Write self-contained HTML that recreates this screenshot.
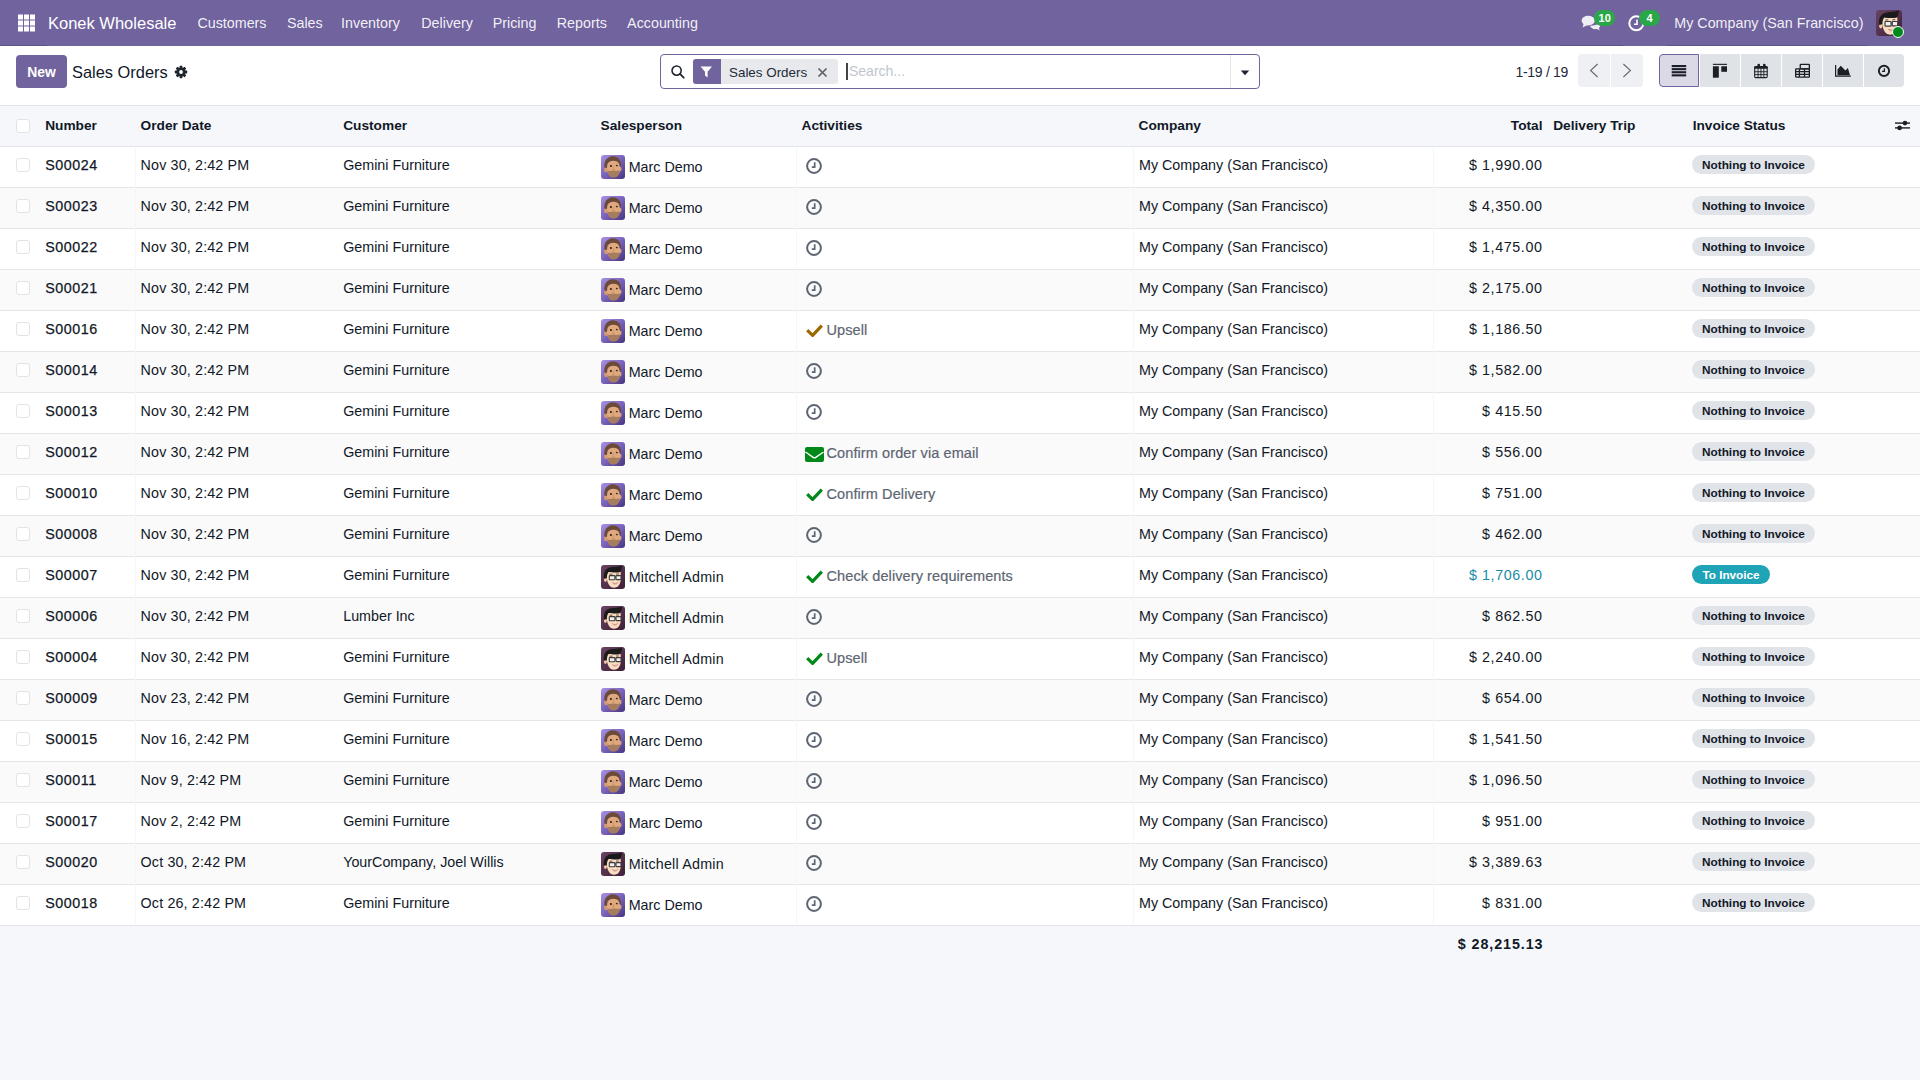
<!DOCTYPE html><html><head><meta charset="utf-8"><title>Sales Orders</title><style>
*{box-sizing:border-box;margin:0;padding:0}
html,body{width:1920px;height:1080px;overflow:hidden;background:#f6f7fa;font-family:"Liberation Sans",sans-serif;color:#111827}
.abs{position:absolute}
.t{position:absolute;white-space:nowrap;line-height:20px;font-size:14.3px}
#nav{position:absolute;left:0;top:0;width:1920px;height:46px;background:#71639e}
#nav .m{position:absolute;top:0;line-height:46px;font-size:14.3px;color:rgba(255,255,255,.92);white-space:nowrap}
#cp{position:absolute;left:0;top:46px;width:1920px;height:60px;background:#fff;border-bottom:1px solid #dfe2e7}
#thead{position:absolute;left:0;top:106px;width:1920px;height:41px;background:#f6f7fa;border-bottom:1px solid #e2e5ea}
.th{position:absolute;top:0;line-height:40px;font-size:13.7px;font-weight:bold;color:#111827;white-space:nowrap}
.row{position:absolute;left:0;width:1920px;height:41px;border-bottom:1px solid #e4e6eb;background:#fff}
.row.s{background:#fafafb}
.cb{position:absolute;left:16px;width:14px;height:14px;border:1px solid #e0e3e7;border-radius:3px;background:#fff}
.c{position:absolute;top:-2px;line-height:40px;font-size:14.3px;white-space:nowrap;color:#111827}
.num{letter-spacing:0.55px;-webkit-text-stroke:0.25px #111827}
.av{position:absolute;display:block}
.ic{position:absolute;display:block}
.act{position:absolute;top:0;line-height:40px;font-size:14.5px;color:#5d6572;white-space:nowrap;-webkit-text-stroke:0.2px #5d6572;letter-spacing:0.1px}
.amt{position:absolute;top:-2px;line-height:40px;font-size:14.3px;white-space:nowrap;text-align:right;right:377.5px;letter-spacing:0.6px}
.badge{position:absolute;left:1692px;height:19px;border-radius:10px;background:#e0e3e8;font-size:11.8px;font-weight:bold;line-height:20px;color:#111827;padding:0 10px;white-space:nowrap}
.badge.ti{background:#1fa3b7;color:#fff}
.sep{position:absolute;top:147px;width:1px;height:778px;background:#f5f6f8}
</style></head><body>
<div id="nav">
<svg class="abs" style="left:0;top:0" width="60" height="46"><rect x="18" y="14.5" width="5" height="5" fill="#fff"/><rect x="18" y="20.5" width="5" height="5" fill="#fff"/><rect x="18" y="26.5" width="5" height="5" fill="#fff"/><rect x="24" y="14.5" width="5" height="5" fill="#fff"/><rect x="24" y="20.5" width="5" height="5" fill="#fff"/><rect x="24" y="26.5" width="5" height="5" fill="#fff"/><rect x="30" y="14.5" width="5" height="5" fill="#fff"/><rect x="30" y="20.5" width="5" height="5" fill="#fff"/><rect x="30" y="26.5" width="5" height="5" fill="#fff"/></svg>
<div class="abs" style="left:0;top:45px;width:47px;height:1px;background:#5f5189"></div>
<div class="abs" style="left:1560px;top:45px;width:63px;height:1px;background:#5f5189"></div>
<div class="abs" style="left:1667px;top:45px;width:201px;height:1px;background:#5f5189"></div>
<div class="m" style="left:48px;font-size:16.5px;color:#fff">Konek Wholesale</div>
<div class="m" style="left:197.4px">Customers</div>
<div class="m" style="left:286.9px">Sales</div>
<div class="m" style="left:341.1px">Inventory</div>
<div class="m" style="left:421.3px">Delivery</div>
<div class="m" style="left:492.7px">Pricing</div>
<div class="m" style="left:556.8px">Reports</div>
<div class="m" style="left:627.1px">Accounting</div>
<svg class="abs" style="left:1580px;top:13px" width="22" height="20" viewBox="0 0 22 20"><ellipse cx="8.2" cy="7.6" rx="6.6" ry="4.9" fill="#efedf5"/><path d="M3.6 10.6 L2.6 14.6 L7.6 12" fill="#efedf5"/><path d="M10 12.8 C11 15.6 14 16.6 17 16 L19.8 17.6 L18.8 15.2 C20.6 14 20.8 11.6 19.6 10 C17.6 11.8 14 12.8 10 12.8Z" fill="#efedf5"/></svg>
<div class="abs" style="left:1594px;top:9.5px;width:21.3px;height:16px;border-radius:8px;background:#2aa748;color:#fff;font-size:11px;font-weight:bold;line-height:16px;text-align:center">10</div>
<svg class="abs" style="left:1628px;top:15px" width="17" height="17" viewBox="0 0 17 17"><circle cx="8.3" cy="8.3" r="7" fill="none" stroke="#fff" stroke-width="2"/><path d="M9 4.5 V9.2 H6" fill="none" stroke="#fff" stroke-width="1.6"/></svg>
<div class="abs" style="left:1639px;top:10px;width:21px;height:16px;border-radius:8px;background:#2aa748;color:#fff;font-size:11px;font-weight:bold;line-height:16px;text-align:center">4</div>
<div class="m" style="left:1674.3px">My Company (San Francisco)</div>
<div class="abs" style="left:1876px;top:10px;width:26px;height:26px"><svg class="av" viewBox="0 0 24 24" width="26" height="26"><defs><linearGradient id="gnav" x1="0" y1="0" x2="1" y2="1"><stop offset="0" stop-color="#6a4362"/><stop offset="1" stop-color="#3f2037"/></linearGradient></defs><rect width="24" height="24" rx="3" fill="url(#gnav)"/><ellipse cx="4.4" cy="14.6" rx="1.5" ry="2.4" fill="#f4cba9"/><path d="M5.6 9 C5.4 16 7.6 22.8 13 22.8 C17.6 22.8 19.6 18.6 20 13 L19.6 6.8 L6.6 6.6 Z" fill="#fadcc0"/><path d="M3 13.8 C2.2 8 4 3.2 9.8 2.2 C13.4 1.6 18 1.8 20.9 0.4 C21.2 3.6 20 6.4 18.6 7.2 C15 7.8 10 7.2 7.6 6.9 C6.4 8.4 5.8 10.8 5.8 13.2 Z" fill="#1b1b1b"/><path d="M8.6 9.2 H11.4 M15.2 9 H17.8" stroke="#3a2a24" stroke-width="0.8"/><rect x="8.3" y="10.6" width="5.6" height="4.2" rx="0.6" fill="#f2f0ee" stroke="#3b3b3b" stroke-width="1.1"/><rect x="15" y="10.6" width="5" height="4" rx="0.6" fill="#f2f0ee" stroke="#3b3b3b" stroke-width="1.1"/><path d="M13.9 12 H15" stroke="#3b3b3b" stroke-width="0.9"/><path d="M11.4 17.6 C13 18.8 15.2 18.8 16.8 17.4 C15.6 19.6 12.6 19.8 11.4 17.6Z" fill="#e6e1de" stroke="#b86a6a" stroke-width="0.5"/></svg></div>
<div class="abs" style="left:1892px;top:26.3px;width:12px;height:12px;border-radius:6px;background:#008a1c;border:1.3px solid #fff"></div>
</div>
<div id="cp">
<div class="abs" style="left:16px;top:9px;width:51px;height:33px;border-radius:4px;background:#71639e;color:#fff;font-weight:bold;font-size:13.9px;line-height:35px;text-align:center">New</div>
<div class="abs" style="left:72px;top:0;line-height:52px;font-size:16.4px;color:#111827;white-space:nowrap">Sales Orders</div>
<svg class="abs" style="left:174px;top:19px" width="14" height="14" viewBox="0 0 14 14"><g fill="#1f2430"><circle cx="7" cy="7" r="4.6"/><rect x="5.6" y="0.8" width="2.8" height="12.4" rx="0.6"/><rect x="0.8" y="5.6" width="12.4" height="2.8" rx="0.6"/><rect x="5.6" y="0.8" width="2.8" height="12.4" rx="0.6" transform="rotate(45 7 7)"/><rect x="5.6" y="0.8" width="2.8" height="12.4" rx="0.6" transform="rotate(-45 7 7)"/></g><circle cx="7" cy="7" r="1.9" fill="#fff"/></svg>
<div class="abs" style="left:660px;top:8px;width:600px;height:35px;border:1px solid #71639e;border-radius:4px;background:#fff">
<svg class="abs" style="left:10px;top:10.4px" width="14" height="14" viewBox="0 0 15 15"><circle cx="6" cy="6" r="4.9" fill="none" stroke="#1f2430" stroke-width="1.7"/><path d="M9.6 9.6 L13.6 13.6" stroke="#1f2430" stroke-width="1.9" stroke-linecap="round"/></svg>
<div class="abs" style="left:32px;top:4px;width:145px;height:25px;border-radius:3px;background:#e7e9ed;overflow:hidden">
<div class="abs" style="left:0;top:0;width:28px;height:25px;background:#71639e"></div>
<svg class="abs" style="left:7px;top:6.5px" width="13" height="12" viewBox="0 0 13 12"><path d="M0.6 0.6 H12 L7.6 5.8 V11.4 L5 9.6 V5.8 Z" fill="#fff"/></svg>
<div class="abs" style="left:36px;top:1px;line-height:25px;font-size:13.4px;color:#1f2937;white-space:nowrap">Sales Orders</div>
<svg class="abs" style="left:124px;top:7.5px" width="11" height="11" viewBox="0 0 11 11"><path d="M1.5 1.5 L9.5 9.5 M9.5 1.5 L1.5 9.5" stroke="#5a5f6a" stroke-width="1.7"/></svg>
</div>
<div class="abs" style="left:185px;top:8px;width:2px;height:17px;background:#444"></div>
<div class="abs" style="left:188px;top:0;line-height:33px;font-size:14px;color:#bfc5cf;white-space:nowrap">Search...</div>
<div class="abs" style="left:569px;top:0;width:1px;height:33px;background:#e3e6ea"></div>
<svg class="abs" style="left:579px;top:15px" width="10" height="6" viewBox="0 0 10 6"><path d="M0.8 0.6 H9.2 L5 5.2Z" fill="#1f2430"/></svg>
</div>
<div class="abs" style="left:1515.5px;top:0;line-height:52px;font-size:14px;color:#1f2937;white-space:nowrap;letter-spacing:-0.3px">1-19 / 19</div>
<div class="abs" style="left:1578px;top:8px;width:32px;height:33px;border-radius:4px 0 0 4px;background:#eff0f3"></div>
<div class="abs" style="left:1611px;top:8px;width:32px;height:33px;border-radius:0 4px 4px 0;background:#eff0f3"></div>
<svg class="abs" style="left:1589px;top:17px" width="10" height="15" viewBox="0 0 10 15"><path d="M8.6 1 L1.6 7.5 L8.6 14" fill="none" stroke="#6b6f78" stroke-width="1.2"/></svg>
<svg class="abs" style="left:1622px;top:17px" width="10" height="15" viewBox="0 0 10 15"><path d="M1.4 1 L8.4 7.5 L1.4 14" fill="none" stroke="#6b6f78" stroke-width="1.2"/></svg>
<div class="abs" style="left:1659px;top:8px;width:40px;height:33px;border-radius:4px 0 0 4px;background:#dcd9e7;border:1px solid #71639e"></div>
<div class="abs" style="left:1700px;top:8px;width:40px;height:33px;border-radius:0;background:#dfe2e6"></div>
<div class="abs" style="left:1741px;top:8px;width:40px;height:33px;border-radius:0;background:#dfe2e6"></div>
<div class="abs" style="left:1782px;top:8px;width:40px;height:33px;border-radius:0;background:#dfe2e6"></div>
<div class="abs" style="left:1823px;top:8px;width:40px;height:33px;border-radius:0;background:#dfe2e6"></div>
<div class="abs" style="left:1864px;top:8px;width:40px;height:33px;border-radius:0 4px 4px 0;background:#dfe2e6"></div>
<svg class="abs" style="left:1671px;top:18px" width="16" height="13" viewBox="0 0 16 13"><g fill="#1c1f26"><rect x="0.7" y="1" width="14.5" height="2.1"/><rect x="0.7" y="4.1" width="14.5" height="2.1"/><rect x="0.7" y="7.2" width="14.5" height="2.1"/><rect x="0.7" y="10.3" width="14.5" height="2.1"/></g></svg>
<svg class="abs" style="left:1712px;top:17px" width="16" height="16" viewBox="0 0 16 16"><g fill="#1c1f26"><rect x="0.9" y="0.8" width="14.1" height="1.1"/><rect x="0.9" y="3.25" width="5.9" height="11.45"/><rect x="9.3" y="3.25" width="5.7" height="5.55"/></g></svg>
<svg class="abs" style="left:1753px;top:17px" width="16" height="16" viewBox="0 0 16 16"><rect x="1.7" y="3.6" width="12.5" height="11" rx="1.2" fill="none" stroke="#1c1f26" stroke-width="1.1"/><rect x="1.2" y="3.2" width="13.5" height="2.6" rx="1" fill="#1c1f26"/><g fill="#1c1f26"><rect x="4.4" y="0.8" width="2.6" height="3" rx="1.2"/><rect x="10" y="0.8" width="2.6" height="3" rx="1.2"/><rect x="1.5" y="8.3" width="13" height="0.9"/><rect x="1.5" y="11.2" width="13" height="0.9"/><rect x="4.6" y="5" width="0.9" height="9.6"/><rect x="7.5" y="5" width="0.9" height="9.6"/><rect x="10.4" y="5" width="0.9" height="9.6"/></g></svg>
<svg class="abs" style="left:1794px;top:17px" width="16" height="16" viewBox="0 0 16 16"><g fill="none" stroke="#1c1f26" stroke-width="1.3"><rect x="1.65" y="5.95" width="13.7" height="8.1" rx="0.6"/><rect x="6.25" y="1.4" width="9.1" height="4.55" rx="0.6"/><path d="M1.6 8.6 H15.3 M1.6 11.3 H15.3 M5.4 5.9 V14 M10.5 5.9 V14"/></g></svg>
<svg class="abs" style="left:1834px;top:17px" width="18" height="16" viewBox="0 0 18 16"><path d="M1.6 2 V13.2 H16.8" fill="none" stroke="#1c1f26" stroke-width="1.2"/><path d="M3.5 12.2 V6.6 L6.8 2.8 L11.4 7.4 L13.9 4.9 L16 12.2Z" fill="#1c1f26"/></svg>
<svg class="abs" style="left:1876px;top:17px" width="16" height="16" viewBox="0 0 16 16"><circle cx="8" cy="7.9" r="5.1" fill="none" stroke="#1c1f26" stroke-width="1.9"/><path d="M8.4 5.3 V8.3 H6" fill="none" stroke="#1c1f26" stroke-width="1.3"/></svg>
</div>
<div id="thead">
<div class="cb" style="top:12.5px"></div>
<div class="th" style="left:45.2px">Number</div>
<div class="th" style="left:140.6px">Order Date</div>
<div class="th" style="left:343.2px">Customer</div>
<div class="th" style="left:600.6px">Salesperson</div>
<div class="th" style="left:801.5px">Activities</div>
<div class="th" style="left:1138.5px">Company</div>
<div class="th" style="left:1553.2px">Delivery Trip</div>
<div class="th" style="left:1692.7px">Invoice Status</div>
<div class="th" style="right:377.5px">Total</div>
<svg class="abs" style="left:1894px;top:13px" width="17" height="13" viewBox="0 0 17 13"><g fill="#1c1f26"><rect x="1" y="3.4" width="15" height="1.4"/><rect x="1" y="8.2" width="15" height="1.4"/><circle cx="11" cy="4.1" r="2.3"/><circle cx="5.6" cy="8.9" r="2.3"/></g></svg>
</div>
<div class="row" style="top:147px">
<div class="cb" style="top:11px"></div>
<div class="c num" style="left:45.2px">S00024</div>
<div class="c" style="left:140.6px;letter-spacing:0.15px">Nov 30, 2:42 PM</div>
<div class="c" style="left:343.2px">Gemini Furniture</div>
<div class="abs" style="left:600.5px;top:7.8px;width:24px;height:24px"><svg class="av" viewBox="0 0 24 24" width="24" height="24"><defs><linearGradient id="gm0" x1="0" y1="0" x2="1" y2="1"><stop offset="0" stop-color="#a892e3"/><stop offset="0.5" stop-color="#7a63bb"/><stop offset="1" stop-color="#46357f"/></linearGradient></defs><rect width="24" height="24" rx="3" fill="url(#gm0)"/><ellipse cx="4.8" cy="14.6" rx="1.7" ry="2.6" fill="#d39a6f"/><ellipse cx="19.2" cy="14" rx="1.3" ry="2.3" fill="#d7a27a"/><ellipse cx="12.6" cy="13.4" rx="6.7" ry="8.6" fill="#dfa87d"/><path d="M3.4 12.6 C2.6 6 6.4 1.4 11.6 1.3 C16.6 1.2 20.6 4.6 19.9 11.6 L18.6 11.2 C18.4 8 17 6 12.8 5.8 C9.2 5.7 7.2 7 6.2 9 L5.9 13 Z" fill="#6b4b37"/><path d="M6.6 15.2 C8 16.6 10.4 15.8 12.6 15.6 C14.8 15.8 17.2 16.4 18.8 15 C18.8 19.6 16.2 22.6 12.6 22.6 C9 22.6 6.8 19.8 6.6 15.2Z" fill="#a57d5e"/><ellipse cx="9.9" cy="11" rx="1.05" ry="0.9" fill="#2b1c14"/><ellipse cx="15.8" cy="10.5" rx="1" ry="0.85" fill="#3a2a20"/><path d="M12.5 11 L12 15.2 L13.6 15" fill="none" stroke="#c48b62" stroke-width="0.7"/></svg></div>
<div class="c" style="left:628.7px;top:0px">Marc Demo</div>
<div class="abs" style="left:806px;top:11.3px"><svg class="ic" width="16" height="16" viewBox="0 0 16 16"><circle cx="8" cy="8" r="6.9" fill="none" stroke="#5d6572" stroke-width="2"/><path d="M8.7 4.3 V9.2 H5.8" fill="none" stroke="#5d6572" stroke-width="1.7"/></svg></div>
<div class="c" style="left:1139px">My Company (San Francisco)</div>
<div class="amt" style="color:#111827">$ 1,990.00</div>
<div class="badge" style="top:8px">Nothing to Invoice</div>
</div>
<div class="row s" style="top:188px">
<div class="cb" style="top:11px"></div>
<div class="c num" style="left:45.2px">S00023</div>
<div class="c" style="left:140.6px;letter-spacing:0.15px">Nov 30, 2:42 PM</div>
<div class="c" style="left:343.2px">Gemini Furniture</div>
<div class="abs" style="left:600.5px;top:7.8px;width:24px;height:24px"><svg class="av" viewBox="0 0 24 24" width="24" height="24"><defs><linearGradient id="gm1" x1="0" y1="0" x2="1" y2="1"><stop offset="0" stop-color="#a892e3"/><stop offset="0.5" stop-color="#7a63bb"/><stop offset="1" stop-color="#46357f"/></linearGradient></defs><rect width="24" height="24" rx="3" fill="url(#gm1)"/><ellipse cx="4.8" cy="14.6" rx="1.7" ry="2.6" fill="#d39a6f"/><ellipse cx="19.2" cy="14" rx="1.3" ry="2.3" fill="#d7a27a"/><ellipse cx="12.6" cy="13.4" rx="6.7" ry="8.6" fill="#dfa87d"/><path d="M3.4 12.6 C2.6 6 6.4 1.4 11.6 1.3 C16.6 1.2 20.6 4.6 19.9 11.6 L18.6 11.2 C18.4 8 17 6 12.8 5.8 C9.2 5.7 7.2 7 6.2 9 L5.9 13 Z" fill="#6b4b37"/><path d="M6.6 15.2 C8 16.6 10.4 15.8 12.6 15.6 C14.8 15.8 17.2 16.4 18.8 15 C18.8 19.6 16.2 22.6 12.6 22.6 C9 22.6 6.8 19.8 6.6 15.2Z" fill="#a57d5e"/><ellipse cx="9.9" cy="11" rx="1.05" ry="0.9" fill="#2b1c14"/><ellipse cx="15.8" cy="10.5" rx="1" ry="0.85" fill="#3a2a20"/><path d="M12.5 11 L12 15.2 L13.6 15" fill="none" stroke="#c48b62" stroke-width="0.7"/></svg></div>
<div class="c" style="left:628.7px;top:0px">Marc Demo</div>
<div class="abs" style="left:806px;top:11.3px"><svg class="ic" width="16" height="16" viewBox="0 0 16 16"><circle cx="8" cy="8" r="6.9" fill="none" stroke="#5d6572" stroke-width="2"/><path d="M8.7 4.3 V9.2 H5.8" fill="none" stroke="#5d6572" stroke-width="1.7"/></svg></div>
<div class="c" style="left:1139px">My Company (San Francisco)</div>
<div class="amt" style="color:#111827">$ 4,350.00</div>
<div class="badge" style="top:8px">Nothing to Invoice</div>
</div>
<div class="row" style="top:229px">
<div class="cb" style="top:11px"></div>
<div class="c num" style="left:45.2px">S00022</div>
<div class="c" style="left:140.6px;letter-spacing:0.15px">Nov 30, 2:42 PM</div>
<div class="c" style="left:343.2px">Gemini Furniture</div>
<div class="abs" style="left:600.5px;top:7.8px;width:24px;height:24px"><svg class="av" viewBox="0 0 24 24" width="24" height="24"><defs><linearGradient id="gm2" x1="0" y1="0" x2="1" y2="1"><stop offset="0" stop-color="#a892e3"/><stop offset="0.5" stop-color="#7a63bb"/><stop offset="1" stop-color="#46357f"/></linearGradient></defs><rect width="24" height="24" rx="3" fill="url(#gm2)"/><ellipse cx="4.8" cy="14.6" rx="1.7" ry="2.6" fill="#d39a6f"/><ellipse cx="19.2" cy="14" rx="1.3" ry="2.3" fill="#d7a27a"/><ellipse cx="12.6" cy="13.4" rx="6.7" ry="8.6" fill="#dfa87d"/><path d="M3.4 12.6 C2.6 6 6.4 1.4 11.6 1.3 C16.6 1.2 20.6 4.6 19.9 11.6 L18.6 11.2 C18.4 8 17 6 12.8 5.8 C9.2 5.7 7.2 7 6.2 9 L5.9 13 Z" fill="#6b4b37"/><path d="M6.6 15.2 C8 16.6 10.4 15.8 12.6 15.6 C14.8 15.8 17.2 16.4 18.8 15 C18.8 19.6 16.2 22.6 12.6 22.6 C9 22.6 6.8 19.8 6.6 15.2Z" fill="#a57d5e"/><ellipse cx="9.9" cy="11" rx="1.05" ry="0.9" fill="#2b1c14"/><ellipse cx="15.8" cy="10.5" rx="1" ry="0.85" fill="#3a2a20"/><path d="M12.5 11 L12 15.2 L13.6 15" fill="none" stroke="#c48b62" stroke-width="0.7"/></svg></div>
<div class="c" style="left:628.7px;top:0px">Marc Demo</div>
<div class="abs" style="left:806px;top:11.3px"><svg class="ic" width="16" height="16" viewBox="0 0 16 16"><circle cx="8" cy="8" r="6.9" fill="none" stroke="#5d6572" stroke-width="2"/><path d="M8.7 4.3 V9.2 H5.8" fill="none" stroke="#5d6572" stroke-width="1.7"/></svg></div>
<div class="c" style="left:1139px">My Company (San Francisco)</div>
<div class="amt" style="color:#111827">$ 1,475.00</div>
<div class="badge" style="top:8px">Nothing to Invoice</div>
</div>
<div class="row s" style="top:270px">
<div class="cb" style="top:11px"></div>
<div class="c num" style="left:45.2px">S00021</div>
<div class="c" style="left:140.6px;letter-spacing:0.15px">Nov 30, 2:42 PM</div>
<div class="c" style="left:343.2px">Gemini Furniture</div>
<div class="abs" style="left:600.5px;top:7.8px;width:24px;height:24px"><svg class="av" viewBox="0 0 24 24" width="24" height="24"><defs><linearGradient id="gm3" x1="0" y1="0" x2="1" y2="1"><stop offset="0" stop-color="#a892e3"/><stop offset="0.5" stop-color="#7a63bb"/><stop offset="1" stop-color="#46357f"/></linearGradient></defs><rect width="24" height="24" rx="3" fill="url(#gm3)"/><ellipse cx="4.8" cy="14.6" rx="1.7" ry="2.6" fill="#d39a6f"/><ellipse cx="19.2" cy="14" rx="1.3" ry="2.3" fill="#d7a27a"/><ellipse cx="12.6" cy="13.4" rx="6.7" ry="8.6" fill="#dfa87d"/><path d="M3.4 12.6 C2.6 6 6.4 1.4 11.6 1.3 C16.6 1.2 20.6 4.6 19.9 11.6 L18.6 11.2 C18.4 8 17 6 12.8 5.8 C9.2 5.7 7.2 7 6.2 9 L5.9 13 Z" fill="#6b4b37"/><path d="M6.6 15.2 C8 16.6 10.4 15.8 12.6 15.6 C14.8 15.8 17.2 16.4 18.8 15 C18.8 19.6 16.2 22.6 12.6 22.6 C9 22.6 6.8 19.8 6.6 15.2Z" fill="#a57d5e"/><ellipse cx="9.9" cy="11" rx="1.05" ry="0.9" fill="#2b1c14"/><ellipse cx="15.8" cy="10.5" rx="1" ry="0.85" fill="#3a2a20"/><path d="M12.5 11 L12 15.2 L13.6 15" fill="none" stroke="#c48b62" stroke-width="0.7"/></svg></div>
<div class="c" style="left:628.7px;top:0px">Marc Demo</div>
<div class="abs" style="left:806px;top:11.3px"><svg class="ic" width="16" height="16" viewBox="0 0 16 16"><circle cx="8" cy="8" r="6.9" fill="none" stroke="#5d6572" stroke-width="2"/><path d="M8.7 4.3 V9.2 H5.8" fill="none" stroke="#5d6572" stroke-width="1.7"/></svg></div>
<div class="c" style="left:1139px">My Company (San Francisco)</div>
<div class="amt" style="color:#111827">$ 2,175.00</div>
<div class="badge" style="top:8px">Nothing to Invoice</div>
</div>
<div class="row" style="top:311px">
<div class="cb" style="top:11px"></div>
<div class="c num" style="left:45.2px">S00016</div>
<div class="c" style="left:140.6px;letter-spacing:0.15px">Nov 30, 2:42 PM</div>
<div class="c" style="left:343.2px">Gemini Furniture</div>
<div class="abs" style="left:600.5px;top:7.8px;width:24px;height:24px"><svg class="av" viewBox="0 0 24 24" width="24" height="24"><defs><linearGradient id="gm4" x1="0" y1="0" x2="1" y2="1"><stop offset="0" stop-color="#a892e3"/><stop offset="0.5" stop-color="#7a63bb"/><stop offset="1" stop-color="#46357f"/></linearGradient></defs><rect width="24" height="24" rx="3" fill="url(#gm4)"/><ellipse cx="4.8" cy="14.6" rx="1.7" ry="2.6" fill="#d39a6f"/><ellipse cx="19.2" cy="14" rx="1.3" ry="2.3" fill="#d7a27a"/><ellipse cx="12.6" cy="13.4" rx="6.7" ry="8.6" fill="#dfa87d"/><path d="M3.4 12.6 C2.6 6 6.4 1.4 11.6 1.3 C16.6 1.2 20.6 4.6 19.9 11.6 L18.6 11.2 C18.4 8 17 6 12.8 5.8 C9.2 5.7 7.2 7 6.2 9 L5.9 13 Z" fill="#6b4b37"/><path d="M6.6 15.2 C8 16.6 10.4 15.8 12.6 15.6 C14.8 15.8 17.2 16.4 18.8 15 C18.8 19.6 16.2 22.6 12.6 22.6 C9 22.6 6.8 19.8 6.6 15.2Z" fill="#a57d5e"/><ellipse cx="9.9" cy="11" rx="1.05" ry="0.9" fill="#2b1c14"/><ellipse cx="15.8" cy="10.5" rx="1" ry="0.85" fill="#3a2a20"/><path d="M12.5 11 L12 15.2 L13.6 15" fill="none" stroke="#c48b62" stroke-width="0.7"/></svg></div>
<div class="c" style="left:628.7px;top:0px">Marc Demo</div>
<div class="abs" style="left:805.5px;top:12.5px"><svg class="ic" width="17" height="13" viewBox="0 0 17 13"><path d="M1.2 6.2 L6.6 11.4 L15.8 1.6" fill="none" stroke="#9a6a00" stroke-width="3.2"/></svg></div>
<div class="act" style="left:826.5px;top:-1px">Upsell</div>
<div class="c" style="left:1139px">My Company (San Francisco)</div>
<div class="amt" style="color:#111827">$ 1,186.50</div>
<div class="badge" style="top:8px">Nothing to Invoice</div>
</div>
<div class="row s" style="top:352px">
<div class="cb" style="top:11px"></div>
<div class="c num" style="left:45.2px">S00014</div>
<div class="c" style="left:140.6px;letter-spacing:0.15px">Nov 30, 2:42 PM</div>
<div class="c" style="left:343.2px">Gemini Furniture</div>
<div class="abs" style="left:600.5px;top:7.8px;width:24px;height:24px"><svg class="av" viewBox="0 0 24 24" width="24" height="24"><defs><linearGradient id="gm5" x1="0" y1="0" x2="1" y2="1"><stop offset="0" stop-color="#a892e3"/><stop offset="0.5" stop-color="#7a63bb"/><stop offset="1" stop-color="#46357f"/></linearGradient></defs><rect width="24" height="24" rx="3" fill="url(#gm5)"/><ellipse cx="4.8" cy="14.6" rx="1.7" ry="2.6" fill="#d39a6f"/><ellipse cx="19.2" cy="14" rx="1.3" ry="2.3" fill="#d7a27a"/><ellipse cx="12.6" cy="13.4" rx="6.7" ry="8.6" fill="#dfa87d"/><path d="M3.4 12.6 C2.6 6 6.4 1.4 11.6 1.3 C16.6 1.2 20.6 4.6 19.9 11.6 L18.6 11.2 C18.4 8 17 6 12.8 5.8 C9.2 5.7 7.2 7 6.2 9 L5.9 13 Z" fill="#6b4b37"/><path d="M6.6 15.2 C8 16.6 10.4 15.8 12.6 15.6 C14.8 15.8 17.2 16.4 18.8 15 C18.8 19.6 16.2 22.6 12.6 22.6 C9 22.6 6.8 19.8 6.6 15.2Z" fill="#a57d5e"/><ellipse cx="9.9" cy="11" rx="1.05" ry="0.9" fill="#2b1c14"/><ellipse cx="15.8" cy="10.5" rx="1" ry="0.85" fill="#3a2a20"/><path d="M12.5 11 L12 15.2 L13.6 15" fill="none" stroke="#c48b62" stroke-width="0.7"/></svg></div>
<div class="c" style="left:628.7px;top:0px">Marc Demo</div>
<div class="abs" style="left:806px;top:11.3px"><svg class="ic" width="16" height="16" viewBox="0 0 16 16"><circle cx="8" cy="8" r="6.9" fill="none" stroke="#5d6572" stroke-width="2"/><path d="M8.7 4.3 V9.2 H5.8" fill="none" stroke="#5d6572" stroke-width="1.7"/></svg></div>
<div class="c" style="left:1139px">My Company (San Francisco)</div>
<div class="amt" style="color:#111827">$ 1,582.00</div>
<div class="badge" style="top:8px">Nothing to Invoice</div>
</div>
<div class="row" style="top:393px">
<div class="cb" style="top:11px"></div>
<div class="c num" style="left:45.2px">S00013</div>
<div class="c" style="left:140.6px;letter-spacing:0.15px">Nov 30, 2:42 PM</div>
<div class="c" style="left:343.2px">Gemini Furniture</div>
<div class="abs" style="left:600.5px;top:7.8px;width:24px;height:24px"><svg class="av" viewBox="0 0 24 24" width="24" height="24"><defs><linearGradient id="gm6" x1="0" y1="0" x2="1" y2="1"><stop offset="0" stop-color="#a892e3"/><stop offset="0.5" stop-color="#7a63bb"/><stop offset="1" stop-color="#46357f"/></linearGradient></defs><rect width="24" height="24" rx="3" fill="url(#gm6)"/><ellipse cx="4.8" cy="14.6" rx="1.7" ry="2.6" fill="#d39a6f"/><ellipse cx="19.2" cy="14" rx="1.3" ry="2.3" fill="#d7a27a"/><ellipse cx="12.6" cy="13.4" rx="6.7" ry="8.6" fill="#dfa87d"/><path d="M3.4 12.6 C2.6 6 6.4 1.4 11.6 1.3 C16.6 1.2 20.6 4.6 19.9 11.6 L18.6 11.2 C18.4 8 17 6 12.8 5.8 C9.2 5.7 7.2 7 6.2 9 L5.9 13 Z" fill="#6b4b37"/><path d="M6.6 15.2 C8 16.6 10.4 15.8 12.6 15.6 C14.8 15.8 17.2 16.4 18.8 15 C18.8 19.6 16.2 22.6 12.6 22.6 C9 22.6 6.8 19.8 6.6 15.2Z" fill="#a57d5e"/><ellipse cx="9.9" cy="11" rx="1.05" ry="0.9" fill="#2b1c14"/><ellipse cx="15.8" cy="10.5" rx="1" ry="0.85" fill="#3a2a20"/><path d="M12.5 11 L12 15.2 L13.6 15" fill="none" stroke="#c48b62" stroke-width="0.7"/></svg></div>
<div class="c" style="left:628.7px;top:0px">Marc Demo</div>
<div class="abs" style="left:806px;top:11.3px"><svg class="ic" width="16" height="16" viewBox="0 0 16 16"><circle cx="8" cy="8" r="6.9" fill="none" stroke="#5d6572" stroke-width="2"/><path d="M8.7 4.3 V9.2 H5.8" fill="none" stroke="#5d6572" stroke-width="1.7"/></svg></div>
<div class="c" style="left:1139px">My Company (San Francisco)</div>
<div class="amt" style="color:#111827">$ 415.50</div>
<div class="badge" style="top:8px">Nothing to Invoice</div>
</div>
<div class="row s" style="top:434px">
<div class="cb" style="top:11px"></div>
<div class="c num" style="left:45.2px">S00012</div>
<div class="c" style="left:140.6px;letter-spacing:0.15px">Nov 30, 2:42 PM</div>
<div class="c" style="left:343.2px">Gemini Furniture</div>
<div class="abs" style="left:600.5px;top:7.8px;width:24px;height:24px"><svg class="av" viewBox="0 0 24 24" width="24" height="24"><defs><linearGradient id="gm7" x1="0" y1="0" x2="1" y2="1"><stop offset="0" stop-color="#a892e3"/><stop offset="0.5" stop-color="#7a63bb"/><stop offset="1" stop-color="#46357f"/></linearGradient></defs><rect width="24" height="24" rx="3" fill="url(#gm7)"/><ellipse cx="4.8" cy="14.6" rx="1.7" ry="2.6" fill="#d39a6f"/><ellipse cx="19.2" cy="14" rx="1.3" ry="2.3" fill="#d7a27a"/><ellipse cx="12.6" cy="13.4" rx="6.7" ry="8.6" fill="#dfa87d"/><path d="M3.4 12.6 C2.6 6 6.4 1.4 11.6 1.3 C16.6 1.2 20.6 4.6 19.9 11.6 L18.6 11.2 C18.4 8 17 6 12.8 5.8 C9.2 5.7 7.2 7 6.2 9 L5.9 13 Z" fill="#6b4b37"/><path d="M6.6 15.2 C8 16.6 10.4 15.8 12.6 15.6 C14.8 15.8 17.2 16.4 18.8 15 C18.8 19.6 16.2 22.6 12.6 22.6 C9 22.6 6.8 19.8 6.6 15.2Z" fill="#a57d5e"/><ellipse cx="9.9" cy="11" rx="1.05" ry="0.9" fill="#2b1c14"/><ellipse cx="15.8" cy="10.5" rx="1" ry="0.85" fill="#3a2a20"/><path d="M12.5 11 L12 15.2 L13.6 15" fill="none" stroke="#c48b62" stroke-width="0.7"/></svg></div>
<div class="c" style="left:628.7px;top:0px">Marc Demo</div>
<div class="abs" style="left:805px;top:12.7px"><svg class="ic" width="19" height="15" viewBox="0 0 19 15"><rect x="0" y="0" width="19" height="15" rx="2" fill="#008818"/><path d="M0.5 5 L8.2 10.4 Q9.5 11.4 10.8 10.4 L18.5 5" fill="none" stroke="#fff" stroke-width="1.4"/></svg></div>
<div class="act" style="left:826.5px;top:-1px">Confirm order via email</div>
<div class="c" style="left:1139px">My Company (San Francisco)</div>
<div class="amt" style="color:#111827">$ 556.00</div>
<div class="badge" style="top:8px">Nothing to Invoice</div>
</div>
<div class="row" style="top:475px">
<div class="cb" style="top:11px"></div>
<div class="c num" style="left:45.2px">S00010</div>
<div class="c" style="left:140.6px;letter-spacing:0.15px">Nov 30, 2:42 PM</div>
<div class="c" style="left:343.2px">Gemini Furniture</div>
<div class="abs" style="left:600.5px;top:7.8px;width:24px;height:24px"><svg class="av" viewBox="0 0 24 24" width="24" height="24"><defs><linearGradient id="gm8" x1="0" y1="0" x2="1" y2="1"><stop offset="0" stop-color="#a892e3"/><stop offset="0.5" stop-color="#7a63bb"/><stop offset="1" stop-color="#46357f"/></linearGradient></defs><rect width="24" height="24" rx="3" fill="url(#gm8)"/><ellipse cx="4.8" cy="14.6" rx="1.7" ry="2.6" fill="#d39a6f"/><ellipse cx="19.2" cy="14" rx="1.3" ry="2.3" fill="#d7a27a"/><ellipse cx="12.6" cy="13.4" rx="6.7" ry="8.6" fill="#dfa87d"/><path d="M3.4 12.6 C2.6 6 6.4 1.4 11.6 1.3 C16.6 1.2 20.6 4.6 19.9 11.6 L18.6 11.2 C18.4 8 17 6 12.8 5.8 C9.2 5.7 7.2 7 6.2 9 L5.9 13 Z" fill="#6b4b37"/><path d="M6.6 15.2 C8 16.6 10.4 15.8 12.6 15.6 C14.8 15.8 17.2 16.4 18.8 15 C18.8 19.6 16.2 22.6 12.6 22.6 C9 22.6 6.8 19.8 6.6 15.2Z" fill="#a57d5e"/><ellipse cx="9.9" cy="11" rx="1.05" ry="0.9" fill="#2b1c14"/><ellipse cx="15.8" cy="10.5" rx="1" ry="0.85" fill="#3a2a20"/><path d="M12.5 11 L12 15.2 L13.6 15" fill="none" stroke="#c48b62" stroke-width="0.7"/></svg></div>
<div class="c" style="left:628.7px;top:0px">Marc Demo</div>
<div class="abs" style="left:805.5px;top:12.5px"><svg class="ic" width="17" height="13" viewBox="0 0 17 13"><path d="M1.2 6.2 L6.6 11.4 L15.8 1.6" fill="none" stroke="#008818" stroke-width="3.2"/></svg></div>
<div class="act" style="left:826.5px;top:-1px">Confirm Delivery</div>
<div class="c" style="left:1139px">My Company (San Francisco)</div>
<div class="amt" style="color:#111827">$ 751.00</div>
<div class="badge" style="top:8px">Nothing to Invoice</div>
</div>
<div class="row s" style="top:516px">
<div class="cb" style="top:11px"></div>
<div class="c num" style="left:45.2px">S00008</div>
<div class="c" style="left:140.6px;letter-spacing:0.15px">Nov 30, 2:42 PM</div>
<div class="c" style="left:343.2px">Gemini Furniture</div>
<div class="abs" style="left:600.5px;top:7.8px;width:24px;height:24px"><svg class="av" viewBox="0 0 24 24" width="24" height="24"><defs><linearGradient id="gm9" x1="0" y1="0" x2="1" y2="1"><stop offset="0" stop-color="#a892e3"/><stop offset="0.5" stop-color="#7a63bb"/><stop offset="1" stop-color="#46357f"/></linearGradient></defs><rect width="24" height="24" rx="3" fill="url(#gm9)"/><ellipse cx="4.8" cy="14.6" rx="1.7" ry="2.6" fill="#d39a6f"/><ellipse cx="19.2" cy="14" rx="1.3" ry="2.3" fill="#d7a27a"/><ellipse cx="12.6" cy="13.4" rx="6.7" ry="8.6" fill="#dfa87d"/><path d="M3.4 12.6 C2.6 6 6.4 1.4 11.6 1.3 C16.6 1.2 20.6 4.6 19.9 11.6 L18.6 11.2 C18.4 8 17 6 12.8 5.8 C9.2 5.7 7.2 7 6.2 9 L5.9 13 Z" fill="#6b4b37"/><path d="M6.6 15.2 C8 16.6 10.4 15.8 12.6 15.6 C14.8 15.8 17.2 16.4 18.8 15 C18.8 19.6 16.2 22.6 12.6 22.6 C9 22.6 6.8 19.8 6.6 15.2Z" fill="#a57d5e"/><ellipse cx="9.9" cy="11" rx="1.05" ry="0.9" fill="#2b1c14"/><ellipse cx="15.8" cy="10.5" rx="1" ry="0.85" fill="#3a2a20"/><path d="M12.5 11 L12 15.2 L13.6 15" fill="none" stroke="#c48b62" stroke-width="0.7"/></svg></div>
<div class="c" style="left:628.7px;top:0px">Marc Demo</div>
<div class="abs" style="left:806px;top:11.3px"><svg class="ic" width="16" height="16" viewBox="0 0 16 16"><circle cx="8" cy="8" r="6.9" fill="none" stroke="#5d6572" stroke-width="2"/><path d="M8.7 4.3 V9.2 H5.8" fill="none" stroke="#5d6572" stroke-width="1.7"/></svg></div>
<div class="c" style="left:1139px">My Company (San Francisco)</div>
<div class="amt" style="color:#111827">$ 462.00</div>
<div class="badge" style="top:8px">Nothing to Invoice</div>
</div>
<div class="row" style="top:557px">
<div class="cb" style="top:11px"></div>
<div class="c num" style="left:45.2px">S00007</div>
<div class="c" style="left:140.6px;letter-spacing:0.15px">Nov 30, 2:42 PM</div>
<div class="c" style="left:343.2px">Gemini Furniture</div>
<div class="abs" style="left:600.5px;top:7.8px;width:24px;height:24px"><svg class="av" viewBox="0 0 24 24" width="24" height="24"><defs><linearGradient id="gt10" x1="0" y1="0" x2="1" y2="1"><stop offset="0" stop-color="#6a4362"/><stop offset="1" stop-color="#3f2037"/></linearGradient></defs><rect width="24" height="24" rx="3" fill="url(#gt10)"/><ellipse cx="4.4" cy="14.6" rx="1.5" ry="2.4" fill="#f4cba9"/><path d="M5.6 9 C5.4 16 7.6 22.8 13 22.8 C17.6 22.8 19.6 18.6 20 13 L19.6 6.8 L6.6 6.6 Z" fill="#fadcc0"/><path d="M3 13.8 C2.2 8 4 3.2 9.8 2.2 C13.4 1.6 18 1.8 20.9 0.4 C21.2 3.6 20 6.4 18.6 7.2 C15 7.8 10 7.2 7.6 6.9 C6.4 8.4 5.8 10.8 5.8 13.2 Z" fill="#1b1b1b"/><path d="M8.6 9.2 H11.4 M15.2 9 H17.8" stroke="#3a2a24" stroke-width="0.8"/><rect x="8.3" y="10.6" width="5.6" height="4.2" rx="0.6" fill="#f2f0ee" stroke="#3b3b3b" stroke-width="1.1"/><rect x="15" y="10.6" width="5" height="4" rx="0.6" fill="#f2f0ee" stroke="#3b3b3b" stroke-width="1.1"/><path d="M13.9 12 H15" stroke="#3b3b3b" stroke-width="0.9"/><path d="M11.4 17.6 C13 18.8 15.2 18.8 16.8 17.4 C15.6 19.6 12.6 19.8 11.4 17.6Z" fill="#e6e1de" stroke="#b86a6a" stroke-width="0.5"/></svg></div>
<div class="c" style="left:628.7px;top:0px;letter-spacing:0.22px">Mitchell Admin</div>
<div class="abs" style="left:805.5px;top:12.5px"><svg class="ic" width="17" height="13" viewBox="0 0 17 13"><path d="M1.2 6.2 L6.6 11.4 L15.8 1.6" fill="none" stroke="#008818" stroke-width="3.2"/></svg></div>
<div class="act" style="left:826.5px;top:-1px">Check delivery requirements</div>
<div class="c" style="left:1139px">My Company (San Francisco)</div>
<div class="amt" style="color:#1a8aa6">$ 1,706.00</div>
<div class="badge ti" style="top:8px;letter-spacing:-0.05px;padding:0 10.5px">To Invoice</div>
</div>
<div class="row s" style="top:598px">
<div class="cb" style="top:11px"></div>
<div class="c num" style="left:45.2px">S00006</div>
<div class="c" style="left:140.6px;letter-spacing:0.15px">Nov 30, 2:42 PM</div>
<div class="c" style="left:343.2px">Lumber Inc</div>
<div class="abs" style="left:600.5px;top:7.8px;width:24px;height:24px"><svg class="av" viewBox="0 0 24 24" width="24" height="24"><defs><linearGradient id="gt11" x1="0" y1="0" x2="1" y2="1"><stop offset="0" stop-color="#6a4362"/><stop offset="1" stop-color="#3f2037"/></linearGradient></defs><rect width="24" height="24" rx="3" fill="url(#gt11)"/><ellipse cx="4.4" cy="14.6" rx="1.5" ry="2.4" fill="#f4cba9"/><path d="M5.6 9 C5.4 16 7.6 22.8 13 22.8 C17.6 22.8 19.6 18.6 20 13 L19.6 6.8 L6.6 6.6 Z" fill="#fadcc0"/><path d="M3 13.8 C2.2 8 4 3.2 9.8 2.2 C13.4 1.6 18 1.8 20.9 0.4 C21.2 3.6 20 6.4 18.6 7.2 C15 7.8 10 7.2 7.6 6.9 C6.4 8.4 5.8 10.8 5.8 13.2 Z" fill="#1b1b1b"/><path d="M8.6 9.2 H11.4 M15.2 9 H17.8" stroke="#3a2a24" stroke-width="0.8"/><rect x="8.3" y="10.6" width="5.6" height="4.2" rx="0.6" fill="#f2f0ee" stroke="#3b3b3b" stroke-width="1.1"/><rect x="15" y="10.6" width="5" height="4" rx="0.6" fill="#f2f0ee" stroke="#3b3b3b" stroke-width="1.1"/><path d="M13.9 12 H15" stroke="#3b3b3b" stroke-width="0.9"/><path d="M11.4 17.6 C13 18.8 15.2 18.8 16.8 17.4 C15.6 19.6 12.6 19.8 11.4 17.6Z" fill="#e6e1de" stroke="#b86a6a" stroke-width="0.5"/></svg></div>
<div class="c" style="left:628.7px;top:0px;letter-spacing:0.22px">Mitchell Admin</div>
<div class="abs" style="left:806px;top:11.3px"><svg class="ic" width="16" height="16" viewBox="0 0 16 16"><circle cx="8" cy="8" r="6.9" fill="none" stroke="#5d6572" stroke-width="2"/><path d="M8.7 4.3 V9.2 H5.8" fill="none" stroke="#5d6572" stroke-width="1.7"/></svg></div>
<div class="c" style="left:1139px">My Company (San Francisco)</div>
<div class="amt" style="color:#111827">$ 862.50</div>
<div class="badge" style="top:8px">Nothing to Invoice</div>
</div>
<div class="row" style="top:639px">
<div class="cb" style="top:11px"></div>
<div class="c num" style="left:45.2px">S00004</div>
<div class="c" style="left:140.6px;letter-spacing:0.15px">Nov 30, 2:42 PM</div>
<div class="c" style="left:343.2px">Gemini Furniture</div>
<div class="abs" style="left:600.5px;top:7.8px;width:24px;height:24px"><svg class="av" viewBox="0 0 24 24" width="24" height="24"><defs><linearGradient id="gt12" x1="0" y1="0" x2="1" y2="1"><stop offset="0" stop-color="#6a4362"/><stop offset="1" stop-color="#3f2037"/></linearGradient></defs><rect width="24" height="24" rx="3" fill="url(#gt12)"/><ellipse cx="4.4" cy="14.6" rx="1.5" ry="2.4" fill="#f4cba9"/><path d="M5.6 9 C5.4 16 7.6 22.8 13 22.8 C17.6 22.8 19.6 18.6 20 13 L19.6 6.8 L6.6 6.6 Z" fill="#fadcc0"/><path d="M3 13.8 C2.2 8 4 3.2 9.8 2.2 C13.4 1.6 18 1.8 20.9 0.4 C21.2 3.6 20 6.4 18.6 7.2 C15 7.8 10 7.2 7.6 6.9 C6.4 8.4 5.8 10.8 5.8 13.2 Z" fill="#1b1b1b"/><path d="M8.6 9.2 H11.4 M15.2 9 H17.8" stroke="#3a2a24" stroke-width="0.8"/><rect x="8.3" y="10.6" width="5.6" height="4.2" rx="0.6" fill="#f2f0ee" stroke="#3b3b3b" stroke-width="1.1"/><rect x="15" y="10.6" width="5" height="4" rx="0.6" fill="#f2f0ee" stroke="#3b3b3b" stroke-width="1.1"/><path d="M13.9 12 H15" stroke="#3b3b3b" stroke-width="0.9"/><path d="M11.4 17.6 C13 18.8 15.2 18.8 16.8 17.4 C15.6 19.6 12.6 19.8 11.4 17.6Z" fill="#e6e1de" stroke="#b86a6a" stroke-width="0.5"/></svg></div>
<div class="c" style="left:628.7px;top:0px;letter-spacing:0.22px">Mitchell Admin</div>
<div class="abs" style="left:805.5px;top:12.5px"><svg class="ic" width="17" height="13" viewBox="0 0 17 13"><path d="M1.2 6.2 L6.6 11.4 L15.8 1.6" fill="none" stroke="#008818" stroke-width="3.2"/></svg></div>
<div class="act" style="left:826.5px;top:-1px">Upsell</div>
<div class="c" style="left:1139px">My Company (San Francisco)</div>
<div class="amt" style="color:#111827">$ 2,240.00</div>
<div class="badge" style="top:8px">Nothing to Invoice</div>
</div>
<div class="row s" style="top:680px">
<div class="cb" style="top:11px"></div>
<div class="c num" style="left:45.2px">S00009</div>
<div class="c" style="left:140.6px;letter-spacing:0.15px">Nov 23, 2:42 PM</div>
<div class="c" style="left:343.2px">Gemini Furniture</div>
<div class="abs" style="left:600.5px;top:7.8px;width:24px;height:24px"><svg class="av" viewBox="0 0 24 24" width="24" height="24"><defs><linearGradient id="gm13" x1="0" y1="0" x2="1" y2="1"><stop offset="0" stop-color="#a892e3"/><stop offset="0.5" stop-color="#7a63bb"/><stop offset="1" stop-color="#46357f"/></linearGradient></defs><rect width="24" height="24" rx="3" fill="url(#gm13)"/><ellipse cx="4.8" cy="14.6" rx="1.7" ry="2.6" fill="#d39a6f"/><ellipse cx="19.2" cy="14" rx="1.3" ry="2.3" fill="#d7a27a"/><ellipse cx="12.6" cy="13.4" rx="6.7" ry="8.6" fill="#dfa87d"/><path d="M3.4 12.6 C2.6 6 6.4 1.4 11.6 1.3 C16.6 1.2 20.6 4.6 19.9 11.6 L18.6 11.2 C18.4 8 17 6 12.8 5.8 C9.2 5.7 7.2 7 6.2 9 L5.9 13 Z" fill="#6b4b37"/><path d="M6.6 15.2 C8 16.6 10.4 15.8 12.6 15.6 C14.8 15.8 17.2 16.4 18.8 15 C18.8 19.6 16.2 22.6 12.6 22.6 C9 22.6 6.8 19.8 6.6 15.2Z" fill="#a57d5e"/><ellipse cx="9.9" cy="11" rx="1.05" ry="0.9" fill="#2b1c14"/><ellipse cx="15.8" cy="10.5" rx="1" ry="0.85" fill="#3a2a20"/><path d="M12.5 11 L12 15.2 L13.6 15" fill="none" stroke="#c48b62" stroke-width="0.7"/></svg></div>
<div class="c" style="left:628.7px;top:0px">Marc Demo</div>
<div class="abs" style="left:806px;top:11.3px"><svg class="ic" width="16" height="16" viewBox="0 0 16 16"><circle cx="8" cy="8" r="6.9" fill="none" stroke="#5d6572" stroke-width="2"/><path d="M8.7 4.3 V9.2 H5.8" fill="none" stroke="#5d6572" stroke-width="1.7"/></svg></div>
<div class="c" style="left:1139px">My Company (San Francisco)</div>
<div class="amt" style="color:#111827">$ 654.00</div>
<div class="badge" style="top:8px">Nothing to Invoice</div>
</div>
<div class="row" style="top:721px">
<div class="cb" style="top:11px"></div>
<div class="c num" style="left:45.2px">S00015</div>
<div class="c" style="left:140.6px;letter-spacing:0.15px">Nov 16, 2:42 PM</div>
<div class="c" style="left:343.2px">Gemini Furniture</div>
<div class="abs" style="left:600.5px;top:7.8px;width:24px;height:24px"><svg class="av" viewBox="0 0 24 24" width="24" height="24"><defs><linearGradient id="gm14" x1="0" y1="0" x2="1" y2="1"><stop offset="0" stop-color="#a892e3"/><stop offset="0.5" stop-color="#7a63bb"/><stop offset="1" stop-color="#46357f"/></linearGradient></defs><rect width="24" height="24" rx="3" fill="url(#gm14)"/><ellipse cx="4.8" cy="14.6" rx="1.7" ry="2.6" fill="#d39a6f"/><ellipse cx="19.2" cy="14" rx="1.3" ry="2.3" fill="#d7a27a"/><ellipse cx="12.6" cy="13.4" rx="6.7" ry="8.6" fill="#dfa87d"/><path d="M3.4 12.6 C2.6 6 6.4 1.4 11.6 1.3 C16.6 1.2 20.6 4.6 19.9 11.6 L18.6 11.2 C18.4 8 17 6 12.8 5.8 C9.2 5.7 7.2 7 6.2 9 L5.9 13 Z" fill="#6b4b37"/><path d="M6.6 15.2 C8 16.6 10.4 15.8 12.6 15.6 C14.8 15.8 17.2 16.4 18.8 15 C18.8 19.6 16.2 22.6 12.6 22.6 C9 22.6 6.8 19.8 6.6 15.2Z" fill="#a57d5e"/><ellipse cx="9.9" cy="11" rx="1.05" ry="0.9" fill="#2b1c14"/><ellipse cx="15.8" cy="10.5" rx="1" ry="0.85" fill="#3a2a20"/><path d="M12.5 11 L12 15.2 L13.6 15" fill="none" stroke="#c48b62" stroke-width="0.7"/></svg></div>
<div class="c" style="left:628.7px;top:0px">Marc Demo</div>
<div class="abs" style="left:806px;top:11.3px"><svg class="ic" width="16" height="16" viewBox="0 0 16 16"><circle cx="8" cy="8" r="6.9" fill="none" stroke="#5d6572" stroke-width="2"/><path d="M8.7 4.3 V9.2 H5.8" fill="none" stroke="#5d6572" stroke-width="1.7"/></svg></div>
<div class="c" style="left:1139px">My Company (San Francisco)</div>
<div class="amt" style="color:#111827">$ 1,541.50</div>
<div class="badge" style="top:8px">Nothing to Invoice</div>
</div>
<div class="row s" style="top:762px">
<div class="cb" style="top:11px"></div>
<div class="c num" style="left:45.2px">S00011</div>
<div class="c" style="left:140.6px;letter-spacing:0.15px">Nov 9, 2:42 PM</div>
<div class="c" style="left:343.2px">Gemini Furniture</div>
<div class="abs" style="left:600.5px;top:7.8px;width:24px;height:24px"><svg class="av" viewBox="0 0 24 24" width="24" height="24"><defs><linearGradient id="gm15" x1="0" y1="0" x2="1" y2="1"><stop offset="0" stop-color="#a892e3"/><stop offset="0.5" stop-color="#7a63bb"/><stop offset="1" stop-color="#46357f"/></linearGradient></defs><rect width="24" height="24" rx="3" fill="url(#gm15)"/><ellipse cx="4.8" cy="14.6" rx="1.7" ry="2.6" fill="#d39a6f"/><ellipse cx="19.2" cy="14" rx="1.3" ry="2.3" fill="#d7a27a"/><ellipse cx="12.6" cy="13.4" rx="6.7" ry="8.6" fill="#dfa87d"/><path d="M3.4 12.6 C2.6 6 6.4 1.4 11.6 1.3 C16.6 1.2 20.6 4.6 19.9 11.6 L18.6 11.2 C18.4 8 17 6 12.8 5.8 C9.2 5.7 7.2 7 6.2 9 L5.9 13 Z" fill="#6b4b37"/><path d="M6.6 15.2 C8 16.6 10.4 15.8 12.6 15.6 C14.8 15.8 17.2 16.4 18.8 15 C18.8 19.6 16.2 22.6 12.6 22.6 C9 22.6 6.8 19.8 6.6 15.2Z" fill="#a57d5e"/><ellipse cx="9.9" cy="11" rx="1.05" ry="0.9" fill="#2b1c14"/><ellipse cx="15.8" cy="10.5" rx="1" ry="0.85" fill="#3a2a20"/><path d="M12.5 11 L12 15.2 L13.6 15" fill="none" stroke="#c48b62" stroke-width="0.7"/></svg></div>
<div class="c" style="left:628.7px;top:0px">Marc Demo</div>
<div class="abs" style="left:806px;top:11.3px"><svg class="ic" width="16" height="16" viewBox="0 0 16 16"><circle cx="8" cy="8" r="6.9" fill="none" stroke="#5d6572" stroke-width="2"/><path d="M8.7 4.3 V9.2 H5.8" fill="none" stroke="#5d6572" stroke-width="1.7"/></svg></div>
<div class="c" style="left:1139px">My Company (San Francisco)</div>
<div class="amt" style="color:#111827">$ 1,096.50</div>
<div class="badge" style="top:8px">Nothing to Invoice</div>
</div>
<div class="row" style="top:803px">
<div class="cb" style="top:11px"></div>
<div class="c num" style="left:45.2px">S00017</div>
<div class="c" style="left:140.6px;letter-spacing:0.15px">Nov 2, 2:42 PM</div>
<div class="c" style="left:343.2px">Gemini Furniture</div>
<div class="abs" style="left:600.5px;top:7.8px;width:24px;height:24px"><svg class="av" viewBox="0 0 24 24" width="24" height="24"><defs><linearGradient id="gm16" x1="0" y1="0" x2="1" y2="1"><stop offset="0" stop-color="#a892e3"/><stop offset="0.5" stop-color="#7a63bb"/><stop offset="1" stop-color="#46357f"/></linearGradient></defs><rect width="24" height="24" rx="3" fill="url(#gm16)"/><ellipse cx="4.8" cy="14.6" rx="1.7" ry="2.6" fill="#d39a6f"/><ellipse cx="19.2" cy="14" rx="1.3" ry="2.3" fill="#d7a27a"/><ellipse cx="12.6" cy="13.4" rx="6.7" ry="8.6" fill="#dfa87d"/><path d="M3.4 12.6 C2.6 6 6.4 1.4 11.6 1.3 C16.6 1.2 20.6 4.6 19.9 11.6 L18.6 11.2 C18.4 8 17 6 12.8 5.8 C9.2 5.7 7.2 7 6.2 9 L5.9 13 Z" fill="#6b4b37"/><path d="M6.6 15.2 C8 16.6 10.4 15.8 12.6 15.6 C14.8 15.8 17.2 16.4 18.8 15 C18.8 19.6 16.2 22.6 12.6 22.6 C9 22.6 6.8 19.8 6.6 15.2Z" fill="#a57d5e"/><ellipse cx="9.9" cy="11" rx="1.05" ry="0.9" fill="#2b1c14"/><ellipse cx="15.8" cy="10.5" rx="1" ry="0.85" fill="#3a2a20"/><path d="M12.5 11 L12 15.2 L13.6 15" fill="none" stroke="#c48b62" stroke-width="0.7"/></svg></div>
<div class="c" style="left:628.7px;top:0px">Marc Demo</div>
<div class="abs" style="left:806px;top:11.3px"><svg class="ic" width="16" height="16" viewBox="0 0 16 16"><circle cx="8" cy="8" r="6.9" fill="none" stroke="#5d6572" stroke-width="2"/><path d="M8.7 4.3 V9.2 H5.8" fill="none" stroke="#5d6572" stroke-width="1.7"/></svg></div>
<div class="c" style="left:1139px">My Company (San Francisco)</div>
<div class="amt" style="color:#111827">$ 951.00</div>
<div class="badge" style="top:8px">Nothing to Invoice</div>
</div>
<div class="row s" style="top:844px">
<div class="cb" style="top:11px"></div>
<div class="c num" style="left:45.2px">S00020</div>
<div class="c" style="left:140.6px;letter-spacing:0.15px">Oct 30, 2:42 PM</div>
<div class="c" style="left:343.2px">YourCompany, Joel Willis</div>
<div class="abs" style="left:600.5px;top:7.8px;width:24px;height:24px"><svg class="av" viewBox="0 0 24 24" width="24" height="24"><defs><linearGradient id="gt17" x1="0" y1="0" x2="1" y2="1"><stop offset="0" stop-color="#6a4362"/><stop offset="1" stop-color="#3f2037"/></linearGradient></defs><rect width="24" height="24" rx="3" fill="url(#gt17)"/><ellipse cx="4.4" cy="14.6" rx="1.5" ry="2.4" fill="#f4cba9"/><path d="M5.6 9 C5.4 16 7.6 22.8 13 22.8 C17.6 22.8 19.6 18.6 20 13 L19.6 6.8 L6.6 6.6 Z" fill="#fadcc0"/><path d="M3 13.8 C2.2 8 4 3.2 9.8 2.2 C13.4 1.6 18 1.8 20.9 0.4 C21.2 3.6 20 6.4 18.6 7.2 C15 7.8 10 7.2 7.6 6.9 C6.4 8.4 5.8 10.8 5.8 13.2 Z" fill="#1b1b1b"/><path d="M8.6 9.2 H11.4 M15.2 9 H17.8" stroke="#3a2a24" stroke-width="0.8"/><rect x="8.3" y="10.6" width="5.6" height="4.2" rx="0.6" fill="#f2f0ee" stroke="#3b3b3b" stroke-width="1.1"/><rect x="15" y="10.6" width="5" height="4" rx="0.6" fill="#f2f0ee" stroke="#3b3b3b" stroke-width="1.1"/><path d="M13.9 12 H15" stroke="#3b3b3b" stroke-width="0.9"/><path d="M11.4 17.6 C13 18.8 15.2 18.8 16.8 17.4 C15.6 19.6 12.6 19.8 11.4 17.6Z" fill="#e6e1de" stroke="#b86a6a" stroke-width="0.5"/></svg></div>
<div class="c" style="left:628.7px;top:0px;letter-spacing:0.22px">Mitchell Admin</div>
<div class="abs" style="left:806px;top:11.3px"><svg class="ic" width="16" height="16" viewBox="0 0 16 16"><circle cx="8" cy="8" r="6.9" fill="none" stroke="#5d6572" stroke-width="2"/><path d="M8.7 4.3 V9.2 H5.8" fill="none" stroke="#5d6572" stroke-width="1.7"/></svg></div>
<div class="c" style="left:1139px">My Company (San Francisco)</div>
<div class="amt" style="color:#111827">$ 3,389.63</div>
<div class="badge" style="top:8px">Nothing to Invoice</div>
</div>
<div class="row" style="top:885px">
<div class="cb" style="top:11px"></div>
<div class="c num" style="left:45.2px">S00018</div>
<div class="c" style="left:140.6px;letter-spacing:0.15px">Oct 26, 2:42 PM</div>
<div class="c" style="left:343.2px">Gemini Furniture</div>
<div class="abs" style="left:600.5px;top:7.8px;width:24px;height:24px"><svg class="av" viewBox="0 0 24 24" width="24" height="24"><defs><linearGradient id="gm18" x1="0" y1="0" x2="1" y2="1"><stop offset="0" stop-color="#a892e3"/><stop offset="0.5" stop-color="#7a63bb"/><stop offset="1" stop-color="#46357f"/></linearGradient></defs><rect width="24" height="24" rx="3" fill="url(#gm18)"/><ellipse cx="4.8" cy="14.6" rx="1.7" ry="2.6" fill="#d39a6f"/><ellipse cx="19.2" cy="14" rx="1.3" ry="2.3" fill="#d7a27a"/><ellipse cx="12.6" cy="13.4" rx="6.7" ry="8.6" fill="#dfa87d"/><path d="M3.4 12.6 C2.6 6 6.4 1.4 11.6 1.3 C16.6 1.2 20.6 4.6 19.9 11.6 L18.6 11.2 C18.4 8 17 6 12.8 5.8 C9.2 5.7 7.2 7 6.2 9 L5.9 13 Z" fill="#6b4b37"/><path d="M6.6 15.2 C8 16.6 10.4 15.8 12.6 15.6 C14.8 15.8 17.2 16.4 18.8 15 C18.8 19.6 16.2 22.6 12.6 22.6 C9 22.6 6.8 19.8 6.6 15.2Z" fill="#a57d5e"/><ellipse cx="9.9" cy="11" rx="1.05" ry="0.9" fill="#2b1c14"/><ellipse cx="15.8" cy="10.5" rx="1" ry="0.85" fill="#3a2a20"/><path d="M12.5 11 L12 15.2 L13.6 15" fill="none" stroke="#c48b62" stroke-width="0.7"/></svg></div>
<div class="c" style="left:628.7px;top:0px">Marc Demo</div>
<div class="abs" style="left:806px;top:11.3px"><svg class="ic" width="16" height="16" viewBox="0 0 16 16"><circle cx="8" cy="8" r="6.9" fill="none" stroke="#5d6572" stroke-width="2"/><path d="M8.7 4.3 V9.2 H5.8" fill="none" stroke="#5d6572" stroke-width="1.7"/></svg></div>
<div class="c" style="left:1139px">My Company (San Francisco)</div>
<div class="amt" style="color:#111827">$ 831.00</div>
<div class="badge" style="top:8px">Nothing to Invoice</div>
</div>
<div class="sep" style="left:135px"></div>
<div class="sep" style="left:796px"></div>
<div class="sep" style="left:1133px"></div>
<div class="sep" style="left:1433px"></div>
<div class="abs" style="top:924px;right:376.6px;line-height:40px;font-size:14.3px;font-weight:bold;color:#111827;letter-spacing:0.92px;white-space:nowrap">$ 28,215.13</div>
</body></html>
